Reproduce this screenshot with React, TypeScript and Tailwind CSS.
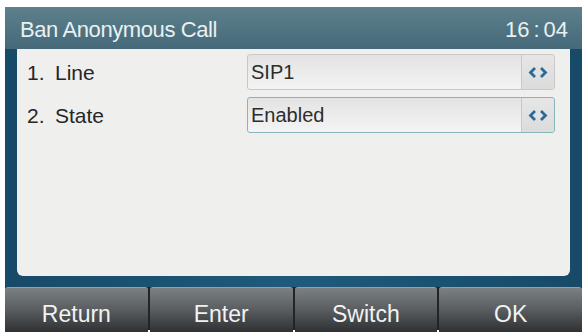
import React from 'react';

const ROWS = [
  { no: '1.', label: 'Line', value: 'SIP1', active: false },
  { no: '2.', label: 'State', value: 'Enabled', active: true },
];

const SOFTKEYS = ['Return', 'Enter', 'Switch', 'OK'];

function Arrows() {
  return (
    <svg width="20" height="13" viewBox="0 0 20 13" fill="none">
      <path d="M7 2 L2.5 6.5 L7 11" stroke="#2a6a9a" strokeWidth="2.8" />
      <path d="M13 2 L17.5 6.5 L13 11" stroke="#2a6a9a" strokeWidth="2.8" />
    </svg>
  );
}

export default function App() {
  return (
    <div className="w-[587px] h-[334px] bg-white pt-[7px] px-[5px] font-['Liberation_Sans',Arial,sans-serif]">
      <div className="flex flex-col h-[323px] bg-gradient-to-r from-[#174a68] via-[#1f5a7c] to-[#174a68]">
        {/* title bar */}
        <div className="h-[42px] flex items-center justify-between pl-[15px] pr-[14px] pt-[3px] bg-gradient-to-b from-[#5d808b] to-[#46697a] text-[#e9f0f2]">
          <span className="text-[22px] tracking-[-0.4px]">Ban Anonymous Call</span>
          <span className="text-[22px] flex items-center">
            <span>16</span>
            <span className="mx-[4px]">:</span>
            <span>04</span>
          </span>
        </div>

        {/* content */}
        <div className="flex-1 px-[12px] pb-[11px]">
          <div className="h-full bg-[#efefee] rounded-b-[6px] pt-[5px] pl-[10px] pr-[15px] flex flex-col gap-[7px]">
            {ROWS.map((row) => (
              <div key={row.no} className="flex items-center h-[36px]">
                <div className="w-[220px] text-[21px] text-[#262626] flex pt-[2px]">
                  <span className="w-[28px]">{row.no}</span>
                  <span>{row.label}</span>
                </div>
                <div
                  className={`flex-1 h-full flex rounded-[3px] border bg-gradient-to-b from-[#e3e3e3] to-[#f4f4f4] ${
                    row.active ? 'border-[#86b5ba]' : 'border-[#c8c8c8]'
                  }`}
                >
                  <div className="flex-1 flex items-center pl-[3px] text-[20px] text-[#2d2d2d]">
                    {row.value}
                  </div>
                  <div className="w-[33px] flex items-center justify-center border-l border-[#c9c9c9] bg-gradient-to-b from-[#e6e6e6] to-[#dcdcdc] rounded-r-[3px]">
                    <Arrows />
                  </div>
                </div>
              </div>
            ))}
          </div>
        </div>

        {/* softkeys */}
        <div className="h-[43px] grid grid-cols-4 gap-[2px] bg-[#222426]">
          {SOFTKEYS.map((k) => (
            <div
              key={k}
              className="flex items-center justify-center rounded-t-[3px] bg-gradient-to-b from-[#7b8083] via-[#595d60] to-[#2f3133] text-[#f2f2f2] text-[23px] border-t border-[#9a9ea0]"
            >
              <span className="pt-[9px]">{k}</span>
            </div>
          ))}
        </div>
      </div>
    </div>
  );
}
